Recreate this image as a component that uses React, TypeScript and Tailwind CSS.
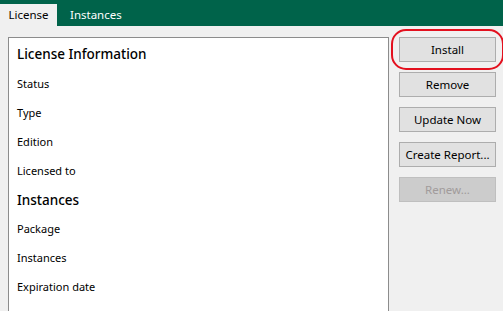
const fields1 = ["Status", "Type", "Edition", "Licensed to"];
const fields2 = ["Package", "Instances", "Expiration date"];

function Btn({ label, disabled, focus }: { label: string; disabled?: boolean; focus?: boolean }) {
  return (
    <div className={focus ? "rounded-[7px] outline-2 outline-[#e3101e] outline-offset-[6px]" : ""}>
      <button
        disabled={disabled}
        className={
          "flex h-[25px] w-[97px] items-center justify-center border text-[11.5px] " +
          (disabled
            ? "border-[#bfbfbf] bg-[#cccccc] text-[#a19b9b]"
            : "border-[#adadad] bg-[#e1e1e1] text-black")
        }
      >
        {label}
      </button>
    </div>
  );
}

export default function App() {
  return (
    <div className="h-[311px] w-[503px] overflow-hidden bg-[#f0f0f0] font-['Noto_Sans',sans-serif] text-black">
      <div className="flex h-[26px] items-end bg-[#00634a]">
        <div className="flex h-[22px] w-[57px] items-center justify-center bg-[#f0f0f0] text-[11.5px]">License</div>
        <div className="flex h-[22px] items-center pl-[13px] text-[11.5px] text-white">Instances</div>
      </div>
      <div className="flex gap-[10px] pl-[8px] pt-[11px]">
        <div className="h-[300px] w-[381px] border border-[#8c8c8c] bg-white pl-[8px] pt-[6px]">
          <div className="flex h-[20px] items-center text-[13.5px] font-medium">License Information</div>
          <div className="h-[6px]" />
          {fields1.map((f) => (
            <div key={f} className="flex h-[29px] items-center text-[11px]">{f}</div>
          ))}
          <div className="flex h-[29px] items-center text-[13.5px] font-medium">Instances</div>
          {fields2.map((f) => (
            <div key={f} className="flex h-[29px] items-center text-[11px]">{f}</div>
          ))}
        </div>
        <div className="flex flex-col gap-[10px]">
          <Btn label="Install" focus />
          <Btn label="Remove" />
          <Btn label="Update Now" />
          <Btn label="Create Report..." />
          <Btn label="Renew..." disabled />
        </div>
      </div>
    </div>
  );
}
